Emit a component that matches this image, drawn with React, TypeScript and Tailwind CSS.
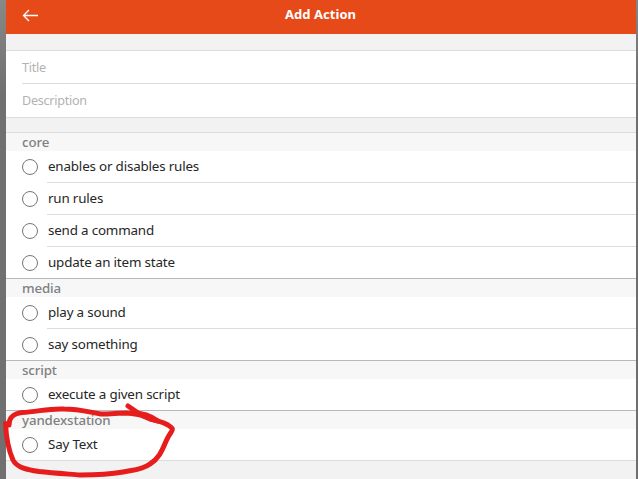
type Group = { name: string; items: string[] };

const groups: Group[] = [
  { name: "core", items: ["enables or disables rules", "run rules", "send a command", "update an item state"] },
  { name: "media", items: ["play a sound", "say something"] },
  { name: "script", items: ["execute a given script"] },
  { name: "yandexstation", items: ["Say Text"] },
];

function Radio() {
  return <span className="size-4 shrink-0 rounded-full border border-[#757575] bg-white" />;
}

function ActionGroup({ group, last }: { group: Group; last: boolean }) {
  return (
    <section>
      <h2 className="h-[18px] bg-[#f7f7f7] pl-4 text-[13.3px] leading-[18px] font-medium tracking-[-0.12px] text-[#808080]">
        {group.name}
      </h2>
      <ul>
        {group.items.map((item, i) => {
          const end = i === group.items.length - 1;
          return (
            <li
              key={item}
              className={`flex h-8 items-stretch pl-4 ${end ? (last ? "border-b border-[#dcdcdc]" : "border-b border-[#b9b9b9]") : ""}`}
            >
              <label className="flex flex-1 items-stretch gap-2.5">
                <span className="flex items-start pt-2">
                  <Radio />
                </span>
                <span
                  className={`-ml-px flex-1 pl-px text-[13.4px] leading-[31px] tracking-[-0.18px] text-[#262626] ${end ? "" : "border-b border-[#dcdcdc]"}`}
                >
                  {item}
                </span>
              </label>
            </li>
          );
        })}
      </ul>
    </section>
  );
}

export default function App() {
  return (
    <div className="relative flex h-[479px] w-[638px] overflow-hidden bg-[#6f6f6f] font-['Noto_Sans',sans-serif]">
      <div className="w-1.5 shrink-0 bg-linear-to-b from-[#888] to-[#707070] to-20%" />
      <main className="w-[630px] shrink-0 bg-[#f2f2f2]">
        <header className="flex h-[34px] items-center bg-[#e64a19] pl-4 text-white">
          <svg className="mt-[-4px] h-4 w-4" viewBox="0 0 16 16" fill="none" stroke="currentColor" strokeWidth="1.3">
            <path d="M16 8.5H1.5M7 3L1.5 8.5L7 14" />
          </svg>
          <h1 className="flex-1 pr-[33px] pb-[5px] text-center text-[13px] font-bold tracking-[0.05px]">Add Action</h1>
        </header>
        <div className="mt-4 border-y border-[#dcdcdc] bg-white pl-4 text-[12.6px] tracking-[-0.27px] text-[#b2b2b2]">
          <div className="h-[33px] border-b border-[#dcdcdc] leading-[33px]">Title</div>
          <div className="h-[33px] leading-[34px]">Description</div>
        </div>
        <div className="mt-3.5 border-t border-[#dcdcdc] bg-white">
          {groups.map((g, i) => (
            <ActionGroup key={g.name} group={g} last={i === groups.length - 1} />
          ))}
        </div>
      </main>
      <div className="flex-1 bg-linear-to-b from-[#858585] to-[#6d6e6e] to-20%" />
      <svg
        className="pointer-events-none absolute inset-0"
        width="638"
        height="479"
        fill="none"
        stroke="#e71d1d"
        strokeWidth="5"
        strokeLinecap="round"
        strokeLinejoin="round"
      >
        <path d="M5.5 423.5C6 434 8 449 13 460C17 468 28 470 39 471.5C53 473 68 474 80 475C98 475 112 474 123 472C133 470 142 470 150 464C163 456 164 442 170 434C173 429 174 429 168 425C163 422 157 421 151 419C143 415 136 413.5 127 413C118 413 111 414 101 414C89 412 78 409 64 409C49 408 37 412 22 412.5C12 414 9 418 9 425" />
        <path d="M128 406C134 410 139 415 150 419L158 421C151 416 143 413 133 413" />
      </svg>
    </div>
  );
}
